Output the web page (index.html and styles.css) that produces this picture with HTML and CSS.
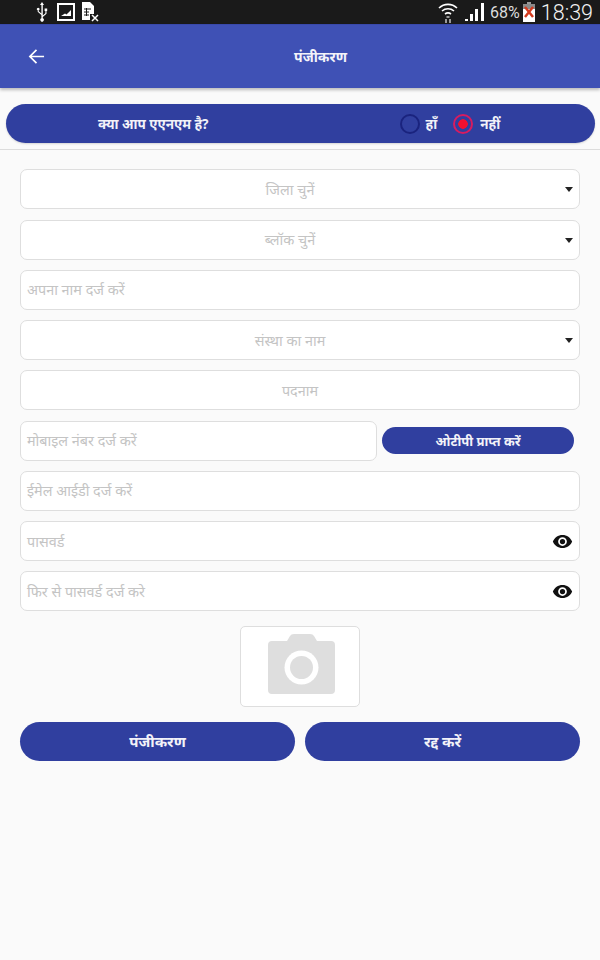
FILE: index.html
```html
<!DOCTYPE html>
<html lang="hi">
<head>
<meta charset="utf-8">
<title>पंजीकरण</title>
<link rel="stylesheet" href="styles.css">
</head>
<body>
<div class="status">
  <div class="status-left">
    <svg class="ic-usb" viewBox="0 0 12 20"><path d="M6 0l2 3H6.8v10.5l2.6-2.2V9H8.6V6.5h2.6V9h-.7v2.8L6.8 15v1.3a1.7 1.7 0 1 1-1.4 0V13L1.7 9.8V8.3a1.3 1.3 0 1 1 1 0v1l2.7 2.2V3H4z" fill="#fff"/></svg>
    <svg class="ic-img" viewBox="0 0 18 18"><rect x="1" y="1" width="16" height="16" fill="none" stroke="#fff" stroke-width="2"/><path d="M4 13h10V7l-3 3-1.500 1.500L8 10.500z" fill="#fff"/></svg>
    <svg class="ic-sim" viewBox="0 0 18 20"><path d="M1 0h8l4 4v8H9v6H1z" fill="#fff"/><path d="M3 7h7M3 10h5M3 13h5M5.500 6v8" stroke="#1a1a1a" fill="none"/><path d="M11 13l6 6M17 13l-6 6" stroke="#fff" stroke-width="1.500"/></svg>
  </div>
  <div class="status-right">
    <svg class="ic-wifi" viewBox="0 0 20 22"><path d="M1 7a13 13 0 0 1 18 0M4 10a9 9 0 0 1 12 0M7 13a5 5 0 0 1 6 0" fill="none" stroke="#fff" stroke-width="1.600"/><path d="M8.500 15h3v2h-3zM7 18h2v4H7zM11 18h2v4h-2z" fill="#9a9a9a"/></svg>
    <svg class="ic-signal" viewBox="0 0 20 18"><path d="M0 16h3v2H0zM5 11h3v7H5zM10 6h3v12h-3zM16 0h3v18h-3z" fill="#fff"/></svg>
    <span class="pct">68%</span>
    <svg class="ic-batt" viewBox="0 0 12 20"><path d="M4 0h4v2H4z" fill="#999"/><rect y="2" width="12" height="18" fill="#fff"/><rect y="2" width="12" height="5" fill="#8a8a8a"/><path d="M2 5l8 10M10 5L2 15" stroke="#d33a1e" stroke-width="2.500"/></svg>
    <span class="time">18:39</span>
  </div>
</div>

<header class="appbar">
  <svg class="ic-back" viewBox="0 0 18 18"><path d="M17 9H2M9 2L2 9l7 7" fill="none" stroke="#fff" stroke-width="1.800"/></svg>
  <h1 class="title">पंजीकरण</h1>
</header>

<section class="question">
  <div class="pill">
    <span class="q-text">क्या आप एएनएम है?</span>
    <div class="radios">
      <span class="radio"></span><span class="r-label">हाँ</span>
      <span class="radio radio-on"></span><span class="r-label">नहीं</span>
    </div>
  </div>
</section>

<main class="form">
  <div class="field center has-caret">जिला चुनें<span class="caret"></span></div>
  <div class="field center has-caret">ब्लॉक चुनें<span class="caret"></span></div>
  <div class="field">अपना नाम दर्ज करें</div>
  <div class="field center has-caret">संस्था का नाम<span class="caret"></span></div>
  <div class="field center">पदनाम</div>
  <div class="row">
    <div class="field grow">मोबाइल नंबर दर्ज करें</div>
    <button class="otp">ओटीपी प्राप्त करें</button>
  </div>
  <div class="field">ईमेल आईडी दर्ज करें</div>
  <div class="field">पासवर्ड<svg class="ic-eye" viewBox="0 0 24 24"><path d="M12 4.500C7 4.500 2.730 7.610 1 12c1.730 4.390 6 7.500 11 7.500s9.270-3.110 11-7.500c-1.730-4.390-6-7.500-11-7.500zM12 17a5 5 0 1 1 0-10 5 5 0 0 1 0 10zm0-8a3 3 0 1 0 0 6 3 3 0 0 0 0-6z"/></svg></div>
  <div class="field">फिर से पासवर्ड दर्ज करे<svg class="ic-eye" viewBox="0 0 24 24"><path d="M12 4.500C7 4.500 2.730 7.610 1 12c1.730 4.390 6 7.500 11 7.500s9.270-3.110 11-7.500c-1.730-4.390-6-7.500-11-7.500zM12 17a5 5 0 1 1 0-10 5 5 0 0 1 0 10zm0-8a3 3 0 1 0 0 6 3 3 0 0 0 0-6z"/></svg></div>
  <div class="photo">
    <svg class="ic-cam" viewBox="0 0 67 60"><path d="M4 7h15l3-5q1-2 4-2h16q3 0 4 2l3 5h14q4 0 4 4v45q0 4-4 4H4q-4 0-4-4V11q0-4 4-4z" fill="#dedede"/><circle cx="33.500" cy="33.500" r="17" fill="#fff"/><circle cx="33.500" cy="33.500" r="11.500" fill="#dedede"/></svg>
  </div>
  <div class="actions">
    <button class="action">पंजीकरण</button>
    <button class="action">रद्द करें</button>
  </div>
</main>
</body>
</html>
```
FILE: styles.css
```css
* { box-sizing: border-box; }
html, body { margin: 0; height: 960px; overflow: hidden; }
body {
  background: #fafafa;
  font-family: "Noto Sans", Roboto, "Noto Sans CJK SC", sans-serif;
}
.status {
  height: 24px;
  background: #1a1a1a;
  display: flex;
  justify-content: space-between;
  align-items: center;
  color: #f2f2f2;
  font-family: Roboto, sans-serif;
  font-weight: 300;
}
.status-left { display: flex; align-items: center; padding-left: 36px; }
.ic-usb { width: 12px; height: 20px; }
.ic-img { width: 18px; height: 18px; margin-left: 9px; }
.ic-sim { width: 18px; height: 20px; margin-left: 6px; }
.status-right { display: flex; align-items: center; padding-right: 7px; }
.ic-wifi { width: 20px; height: 22px; }
.ic-signal { width: 20px; height: 18px; margin-left: 7px; }
.pct { font-size: 16px; margin-left: 5px; font-weight: 400; color: #ddd; }
.ic-batt { width: 12px; height: 20px; margin-left: 3px; }
.time { font-size: 21.500px; margin-left: 6px; }

.appbar {
  height: 64px;
  background: #3f51b5;
  border-top: 1px solid #3949ab;
  box-shadow: 0 2px 3px rgba(0,0,0,.25);
  display: flex;
  align-items: center;
  justify-content: center;
  padding-left: 41px;
  position: relative;
}
.ic-back { position: absolute; left: 28px; top: 23px; width: 17px; height: 17px; }
.title { margin: 0; font-size: 14px; font-weight: 700; color: #f4f4fa; }

.question {
  margin-top: 16px;
  padding: 0 5px 6px 6px;
  height: 46px;
  border-bottom: 1px solid #dcdcdc;
}
.pill {
  height: 39px;
  border-radius: 20px;
  background: #303f9f;
  color: #f2f2f8;
  font-size: 13.500px;
  font-weight: 700;
  display: flex;
  align-items: center;
  padding-left: 92px;
  box-shadow: 0 1px 2px rgba(0,0,0,.15);
}
.radios { display: flex; align-items: center; margin-left: 191px; }
.radio {
  width: 20px;
  height: 20px;
  border-radius: 50%;
  border: 2px solid #1a237e;
}
.radio-on {
  border-color: #d81b60;
  background: radial-gradient(circle, #f01030 0 4.500px, #303f9f 5px);
  margin-left: 16px;
}
.r-label { margin-left: 6px; }
.radio-on + .r-label { margin-left: 7px; }

.form {
  padding: 19.400px 20px 0;
  display: flex;
  flex-direction: column;
  gap: 10.250px;
}
.field {
  height: 40px;
  background: #fff;
  border: 1px solid #dedede;
  border-radius: 7px;
  color: #c4c4c4;
  font-size: 14.400px;
  display: flex;
  align-items: center;
  padding-left: 6px;
  position: relative;
}
.center { justify-content: center; padding-left: 0; }
.has-caret { padding-right: 20px; }
.caret {
  position: absolute;
  right: 6px;
  top: 17px;
  border: 4.500px solid transparent;
  border-top: 5px solid #222;
  border-bottom: 0;
}
.row { display: flex; align-items: center; }
.grow { flex: 0 0 357px; }
.otp {
  margin-left: 5px;
  width: 192px;
  height: 27px;
  border: 0;
  border-radius: 14px;
  background: #303f9f;
  color: #f2f2f8;
  font: inherit;
  font-size: 13px;
  font-weight: 700;
  padding: 0;
}
.ic-eye { position: absolute; right: 6px; top: 9px; width: 21px; height: 21px; fill: #111; }
.photo {
  width: 120px;
  height: 81px;
  align-self: center;
  margin-top: 4.600px;
  padding: 0 0 6px 2px;
  background: #fff;
  border: 1px solid #dedede;
  border-radius: 5px;
  display: flex;
  align-items: center;
  justify-content: center;
}
.ic-cam { width: 67px; height: 60px; }
.actions { display: flex; gap: 10px; margin-top: 4.500px; }
.action {
  flex: 1;
  height: 39px;
  border: 0;
  border-radius: 20px;
  background: #303f9f;
  color: #f2f2f8;
  font: inherit;
  font-size: 15px;
  font-weight: 700;
  padding: 0;
}
```
